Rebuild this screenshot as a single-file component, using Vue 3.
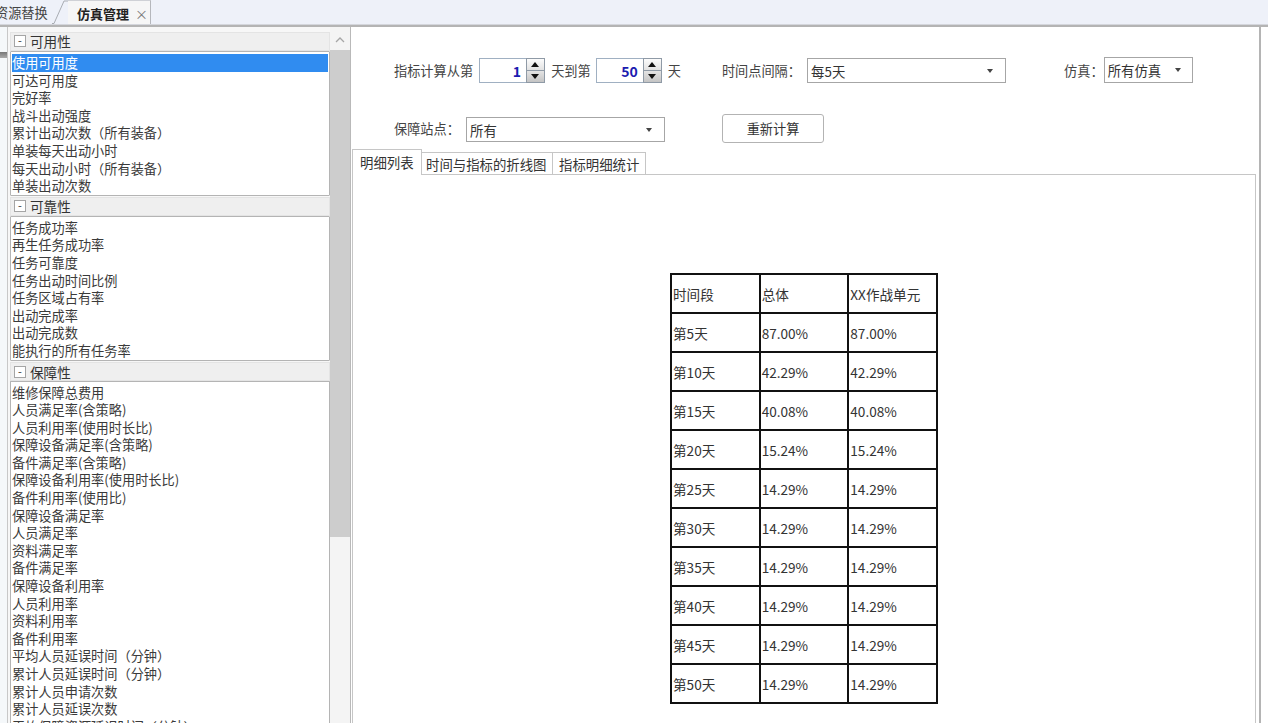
<script setup>
const groups = [
  { title: '可用性', cls: 'g1', items: ['使用可用度','可达可用度','完好率','战斗出动强度','累计出动次数（所有装备）','单装每天出动小时','每天出动小时（所有装备）','单装出动次数'] },
  { title: '可靠性', cls: 'g2', items: ['任务成功率','再生任务成功率','任务可靠度','任务出动时间比例','任务区域占有率','出动完成率','出动完成数','能执行的所有任务率'] },
  { title: '保障性', cls: 'g3', items: ['维修保障总费用','人员满足率(含策略)','人员利用率(使用时长比)','保障设备满足率(含策略)','备件满足率(含策略)','保障设备利用率(使用时长比)','备件利用率(使用比)','保障设备满足率','人员满足率','资料满足率','备件满足率','保障设备利用率','人员利用率','资料利用率','备件利用率','平均人员延误时间（分钟）','累计人员延误时间（分钟）','累计人员申请次数','累计人员延误次数','平均保障资源延误时间（分钟）'] }
]
const rows = [
  ['时间段','总体','XX作战单元'],
  ['第5天','87.00%','87.00%'],['第10天','42.29%','42.29%'],['第15天','40.08%','40.08%'],
  ['第20天','15.24%','15.24%'],['第25天','14.29%','14.29%'],['第30天','14.29%','14.29%'],
  ['第35天','14.29%','14.29%'],['第40天','14.29%','14.29%'],['第45天','14.29%','14.29%'],['第50天','14.29%','14.29%']
]
</script>

<template>
  <div class="app">
    <header class="tabbar">
      <span class="doc-tab">资源替换</span>
      <svg class="slant" width="16" height="24" viewBox="0 0 16 24"><path d="M0 23.5 H2 L12 1 H16" fill="none" stroke="#a9acb2"/></svg>
      <span class="doc-tab active">仿真管理<i class="close">×</i></span>
    </header>
    <div class="body">
      <div class="strip"><span class="strip-mark"></span></div>
      <aside class="side">
        <div class="side-list">
          <section v-for="g in groups" :key="g.title" :class="['group', g.cls]">
            <div class="g-head"><span class="toggle">-</span>{{ g.title }}</div>
            <ul class="g-list">
              <li v-for="(it, i) in g.items" :key="it" :class="{ sel: g.cls === 'g1' && i === 0 }">{{ it }}</li>
            </ul>
          </section>
        </div>
        <div class="scroll">
          <div class="scroll-up">
            <svg width="10" height="6" viewBox="0 0 10 6"><path d="M1 5 L5 1 L9 5" fill="none" stroke="#a6a6a6" stroke-width="1.3"/></svg>
          </div>
          <div class="scroll-thumb"></div>
        </div>
      </aside>
      <main class="main">
        <div class="ctrl row1">
          <label class="l1">指标计算从第</label>
          <div class="spin"><b>1</b><div class="arrows"><span class="up"></span><span class="down"></span></div></div>
          <label class="l2">天到第</label>
          <div class="spin"><b>50</b><div class="arrows"><span class="up"></span><span class="down"></span></div></div>
          <label class="l3">天</label>
          <label class="l4">时间点间隔：</label>
          <div class="combo c-interval">每5天<span class="caret"></span></div>
          <label class="l5">仿真：</label>
          <div class="combo c-sim">所有仿真<span class="caret"></span></div>
        </div>
        <div class="ctrl row2">
          <label class="l-station">保障站点：</label>
          <div class="combo c-station">所有<span class="caret"></span></div>
          <button class="btn">重新计算</button>
        </div>
        <nav class="tabs">
          <span class="tab on">明细列表</span>
          <span class="tab t2">时间与指标的折线图</span>
          <span class="tab t3">指标明细统计</span>
        </nav>
        <div class="pane">
          <table class="grid">
            <tbody>
              <tr v-for="r in rows" :key="r[0]"><td v-for="(c, i) in r" :key="i">{{ c }}</td></tr>
            </tbody>
          </table>
        </div>
      </main>
    </div>
  </div>
</template>

<style>
html, body { margin: 0; background: #fff; overflow: hidden; }
</style>

<style scoped>
.app { width: 1268px; height: 723px; overflow: hidden; font-family: "Noto Sans CJK SC", "Noto Sans", sans-serif; font-size: 13.2px; color: #3a3a3a; background: #fff; }
.tabbar { height: 24px; display: flex; align-items: stretch; background: #eef1f9; border-bottom: 1px solid #d4d6dc; }
.doc-tab { margin-left: -5px; width: 57px; line-height: 26px; white-space: nowrap; color: #444; }
.slant { margin-left: 0; flex: none; }
.doc-tab.active { margin-left: 0; width: 73px; padding-left: 9px; font-weight: 700; font-size: 13px; color: #222; background: #f6f6f6; border-right: 1px solid #b5b7bc; border-top: 1px solid #cfd1d6; }
.close { font-style: normal; font-weight: 400; color: #777; margin-left: 6px; font-size: 13px; }
.body { display: flex; height: 696px; border-top: 2px solid #b4b4b4; }
.strip { width: 7px; border-right: 1px solid #c8c8c8; background: #f5f8fa; flex: none; position: relative; }
.strip-mark { position: absolute; left: 0; top: 25px; width: 7px; height: 6px; background: linear-gradient(#777, #aaa); }
.side { width: 342px; display: flex; flex: none; background: #f7f7f7; overflow: hidden; }
.side-list { width: 320px; margin-left: 2px; padding-top: 5px; flex: none; box-sizing: border-box; }
.g-head { height: 19px; box-sizing: border-box; padding-bottom: 1px; background: #efefef; border: 1px solid #e4e4e4; color: #333; display: flex; align-items: center; font-size: 13.6px; }
.toggle { width: 10px; height: 10px; border: 1px solid #a5a5a5; background: #fff; font-size: 11px; line-height: 9px; text-align: center; margin: 0 4px 0 3px; flex: none; }
.g-list { list-style: none; margin: 0; padding: 2px 1px 0; background: #fff; border: 1px solid #b4b4b4; border-radius: 1px; }
.g-list li { height: 17.6px; line-height: 17.6px; white-space: nowrap; }
.g-list li.sel { background: #308cf0; color: #fff; }
.g2 .g-head, .g3 .g-head { margin-top: 1px; }
.g3 .g-head { padding-bottom: 0; padding-top: 1px; }
.g3 .g-list { border-bottom: none; }
.scroll { width: 20px; flex: none; background: #f4f4f4; }
.scroll-up { height: 20px; display: flex; align-items: center; justify-content: center; margin-top: 3px; }
.scroll-thumb { height: 487px; background: #cdcdcd; }
.main { flex: 1; margin-right: 7px; box-sizing: border-box; border-left: 1px solid #b9b9b9; border-right: 2px solid #b4b4b4; min-width: 0; background: #fff; overflow: hidden; }
.ctrl { display: flex; align-items: center; color: #444; }
.row1 { height: 25px; margin-top: 31px; padding-left: 43px; }
.row2 { height: 29px; margin-top: 31px; padding-left: 43px; }
label { white-space: nowrap; flex: none; }
.spin { width: 66px; height: 25px; box-sizing: border-box; border: 1px solid #a0b0c2; display: flex; align-items: center; justify-content: flex-end; background: #fff; color: #1c1cb0; font-size: 14px; flex: none; }
.spin b { font-weight: 700; margin-right: 5px; }
.arrows { width: 19px; height: 25px; margin-right: -1px; display: flex; flex-direction: column; flex: none; border: 1px solid #8f9aa6; box-sizing: border-box; background: #f1f1f1; }
.arrows span { flex: 1; position: relative; background: linear-gradient(#fcfcfc, #e2e2e2); }
.arrows .down { background: linear-gradient(#e4e4e4, #c4c4c4); }
.arrows .up { border-bottom: 1px solid #8f9aa6; }
.arrows .up::after, .arrows .down::after { content: ""; position: absolute; left: 4px; top: 3px; border-left: 4px solid transparent; border-right: 4px solid transparent; }
.arrows .up::after { border-bottom: 5px solid #111; }
.arrows .down::after { border-top: 5px solid #111; }
.l1 { margin-right: 6px; }
.l2 { margin: 0 5px 0 6px; }
.l3 { margin-left: 6px; }
.l4 { margin-left: 41px; margin-right: 6px; width: 79.2px; }
.l5 { margin-left: 58px; width: 39.6px; }
.l-station { width: 72px; flex: none; }
.combo { position: relative; height: 25px; line-height: 24px; box-sizing: border-box; border: 1px solid #a6a6a6; padding-left: 3px; background: #fff; color: #333; white-space: nowrap; font-size: 13.4px; flex: none; }
.caret { position: absolute; right: 12px; top: 10px; border-left: 3px solid transparent; border-right: 3px solid transparent; border-top: 4px solid #444; }
.c-interval { width: 199px; }
.c-sim { width: 89px; height: 26px; margin-top: -1px; }
.c-sim .caret { right: 11px; }
.c-station { width: 199px; height: 25px; margin-top: 1px; }
.btn { width: 102px; height: 29px; margin-left: 57px; font: inherit; color: #333; background: #fff; border: 1px solid #b3b3b3; border-radius: 3px; padding: 0; flex: none; }
.tabs { display: flex; align-items: flex-end; height: 25px; margin-top: 6px; margin-left: 1px; font-size: 13.4px; }
.tab { height: 22px; line-height: 22px; box-sizing: border-box; border: 1px solid #c6c6c6; border-bottom: none; border-left: none; color: #333; white-space: nowrap; }
.tab.on { height: 26px; line-height: 25px; width: 70px; box-sizing: border-box; border-left: 1px solid #c6c6c6; padding-left: 7px; background: #fff; position: relative; top: 1px; margin-top: -1px; z-index: 1; }
.t2 { width: 131px; padding-left: 4px; }
.t3 { width: 93px; padding-left: 6px; }
.pane { margin: 0 3px 0 1px; border: 1px solid #c6c6c6; height: 560px; padding-top: 98px; box-sizing: border-box; display: flex; justify-content: center; background: #fff; }
.grid { border-collapse: collapse; align-self: flex-start; font-size: 13.6px; color: #333; width: 268px; height: 428px; table-layout: fixed; }
.grid td { border: 2px solid #111; padding: 0 0 0 1px; height: 37px; white-space: nowrap; }
</style>
